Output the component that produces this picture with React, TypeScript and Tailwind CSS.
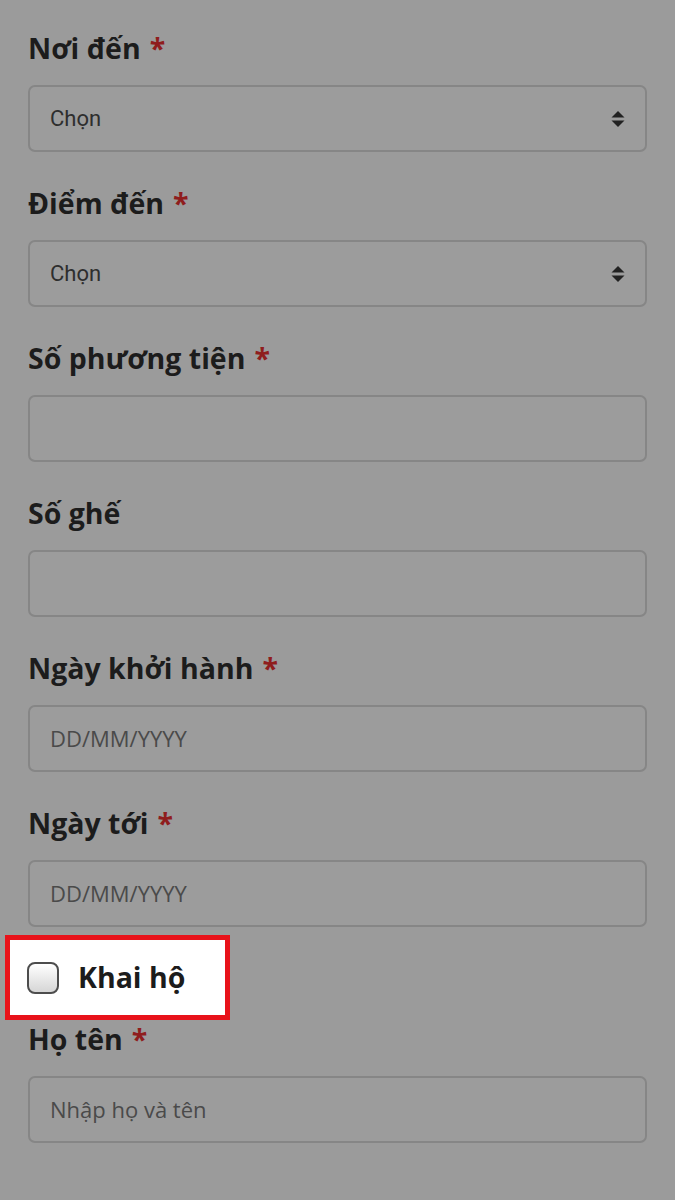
const labelCls =
  "flex h-[38px] items-center text-[28.5px] font-bold leading-none text-[#1c1c1c] [font-family:'Open_Sans',sans-serif]";

const boxCls =
  "flex h-[67px] w-full items-center rounded-[7px] border-2 border-[#868686] bg-[#9c9c9c] px-[20px]";

function Label({ text, required }: { text: string; required?: boolean }) {
  return (
    <div className={labelCls}>
      <span>{text}</span>
      {required && <span className="ml-[9px] text-[#8f1d1d]">*</span>}
    </div>
  );
}

function SortArrows() {
  return (
    <svg width="14" height="18" viewBox="0 0 14 18" className="shrink-0">
      <path d="M7 1 L13.5 7.5 H0.5 Z" fill="#222" />
      <path d="M7 17 L13.5 10.5 H0.5 Z" fill="#222" />
    </svg>
  );
}

function SelectField({ label }: { label: string }) {
  return (
    <div className="flex flex-col">
      <Label text={label} required />
      <div className={`${boxCls} mt-[18px] justify-between`}>
        <span className="text-[22px] text-[#2e2e2e] [font-family:Roboto,sans-serif]">Chọn</span>
        <SortArrows />
      </div>
    </div>
  );
}

function TextField({
  label,
  required,
  placeholder,
}: {
  label: string;
  required?: boolean;
  placeholder?: string;
}) {
  return (
    <div className="flex flex-col">
      <Label text={label} required={required} />
      <div className={`${boxCls} mt-[18px]`}>
        {placeholder && (
          <span className="text-[22px] text-[#4a4a4a] [font-family:'Open_Sans',sans-serif]">
            {placeholder}
          </span>
        )}
      </div>
    </div>
  );
}

export default function App() {
  return (
    <div className="min-h-[1200px] w-[675px] bg-[#9b9b9b] px-[28px] pt-[29px]">
      <div className="flex flex-col gap-[32px]">
        <SelectField label="Nơi đến" />
        <SelectField label="Điểm đến" />
        <TextField label="Số phương tiện" required />
        <TextField label="Số ghế" />
        <TextField label="Ngày khởi hành" required placeholder="DD/MM/YYYY" />
        <TextField label="Ngày tới" required placeholder="DD/MM/YYYY" />
      </div>

      {/* highlighted checkbox */}
      <div className="ml-[-23px] mt-[8px] flex h-[85px] w-[225px] items-center border-[5px] border-[#e8121a] bg-white pl-[17px]">
        <span className="h-[32px] w-[32px] shrink-0 rounded-[8px] border-2 border-[#4d4d4d] bg-gradient-to-b from-white to-[#d6d6d6]" />
        <span className="ml-[19px] text-[28.5px] font-bold text-[#1c1c1c] [font-family:'Open_Sans',sans-serif]">
          Khai hộ
        </span>
      </div>

      <TextField label="Họ tên" required placeholder="Nhập họ và tên" />
    </div>
  );
}
